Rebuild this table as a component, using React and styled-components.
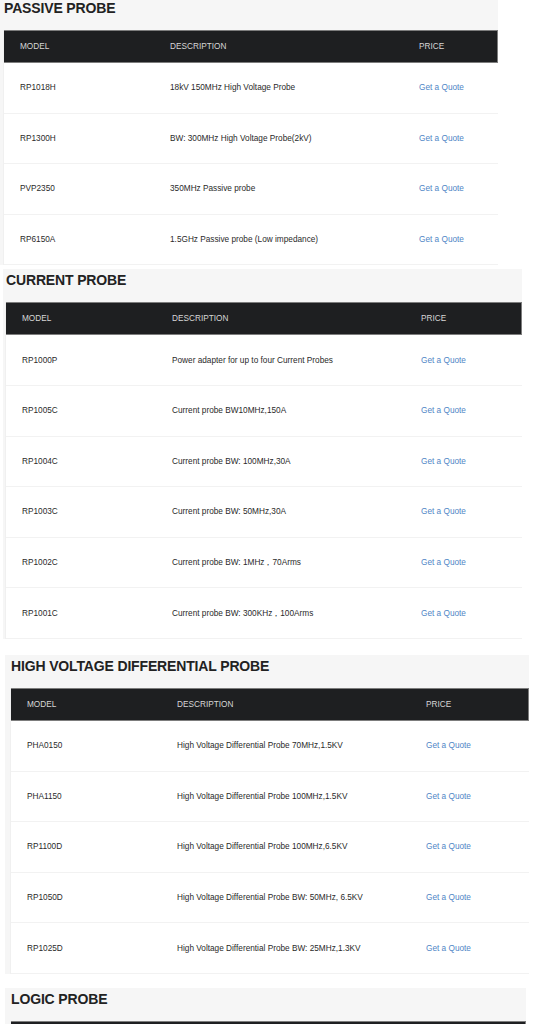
import styled, { createGlobalStyle } from 'styled-components'

const GlobalStyle = createGlobalStyle`
	body {
		margin: 0;
		background: #fff;
		font-family: 'Liberation Sans', Arial, sans-serif;
	}
`

const Page = styled.div`
	width: 534px;
	height: 1024px;
	overflow: hidden;
	display: flex;
	flex-direction: column;
`

const Section = styled.section`
	margin-top: ${(props) => props.top}px;
	margin-left: ${(props) => props.left}px;
	width: ${(props) => props.width}px;
	padding-left: ${(props) => props.inset}px;
	box-sizing: border-box;
	background: #f6f6f6;
	flex-shrink: 0;
`

const Title = styled.h2`
	margin: 0;
	height: 33px;
	box-sizing: border-box;
	padding: 3px 0 0 1px;
	font-size: 14px;
	line-height: 16px;
	font-weight: 700;
	color: #222;
	letter-spacing: -0.15px;
`

const Table = styled.div`
	background: #fff;
	border-left: 1px solid #f0f0f0;
`

const HeadRow = styled.div`
	display: grid;
	grid-template-columns: 150px 249px 1fr;
	height: 33px;
	align-items: center;
	background: #1e1f21;
	border: 1px solid #7d7d7d;
	border-left: none;
	box-sizing: border-box;
	padding-left: 16px;
	font-size: 8.25px;
	color: #d6d6d6;
`

const Row = styled.div`
	display: grid;
	grid-template-columns: 150px 249px 1fr;
	height: 50.6px;
	align-items: center;
	border-bottom: 1px solid #f2f2f2;
	box-sizing: border-box;
	padding-left: 16px;
	font-size: 8.25px;
	color: #2a2a2a;
`

const Quote = styled.a`
	color: #4f86c6;
	text-decoration: none;
`

const sections = [
	{
		title: 'PASSIVE PROBE',
		top: -3,
		left: 0,
		width: 498,
		inset: 3,
		rows: [
			['RP1018H', '18kV 150MHz High Voltage Probe'],
			['RP1300H', 'BW: 300MHz High Voltage Probe(2kV)'],
			['PVP2350', '350MHz Passive probe'],
			['RP6150A', '1.5GHz Passive probe (Low impedance)'],
		],
	},
	{
		title: 'CURRENT PROBE',
		top: 4,
		left: 3,
		width: 519,
		inset: 2,
		rows: [
			['RP1000P', 'Power adapter for up to four Current Probes'],
			['RP1005C', 'Current probe BW10MHz,150A'],
			['RP1004C', 'Current probe BW: 100MHz,30A'],
			['RP1003C', 'Current probe BW: 50MHz,30A'],
			['RP1002C', 'Current probe BW: 1MHz，70Arms'],
			['RP1001C', 'Current probe BW: 300KHz，100Arms'],
		],
	},
	{
		title: 'HIGH VOLTAGE DIFFERENTIAL PROBE',
		top: 16,
		left: 5,
		width: 524,
		inset: 5,
		rows: [
			['PHA0150', 'High Voltage Differential Probe 70MHz,1.5KV'],
			['PHA1150', 'High Voltage Differential Probe 100MHz,1.5KV'],
			['RP1100D', 'High Voltage Differential Probe 100MHz,6.5KV'],
			['RP1050D', 'High Voltage Differential Probe BW: 50MHz, 6.5KV'],
			['RP1025D', 'High Voltage Differential Probe BW: 25MHz,1.3KV'],
		],
	},
	{
		title: 'LOGIC PROBE',
		top: 14,
		left: 5,
		width: 521,
		inset: 5,
		rows: [],
	},
]

function App() {
	return (
		<Page>
			<GlobalStyle />
			{sections.map((sec) => (
				<Section key={sec.title} top={sec.top} left={sec.left} width={sec.width} inset={sec.inset}>
					<Title>{sec.title}</Title>
					<Table>
						<HeadRow>
							<span>MODEL</span>
							<span>DESCRIPTION</span>
							<span>PRICE</span>
						</HeadRow>
						{sec.rows.map(([model, desc]) => (
							<Row key={model}>
								<span>{model}</span>
								<span>{desc}</span>
								<Quote href="#">Get a Quote</Quote>
							</Row>
						))}
					</Table>
				</Section>
			))}
		</Page>
	)
}

export default App
